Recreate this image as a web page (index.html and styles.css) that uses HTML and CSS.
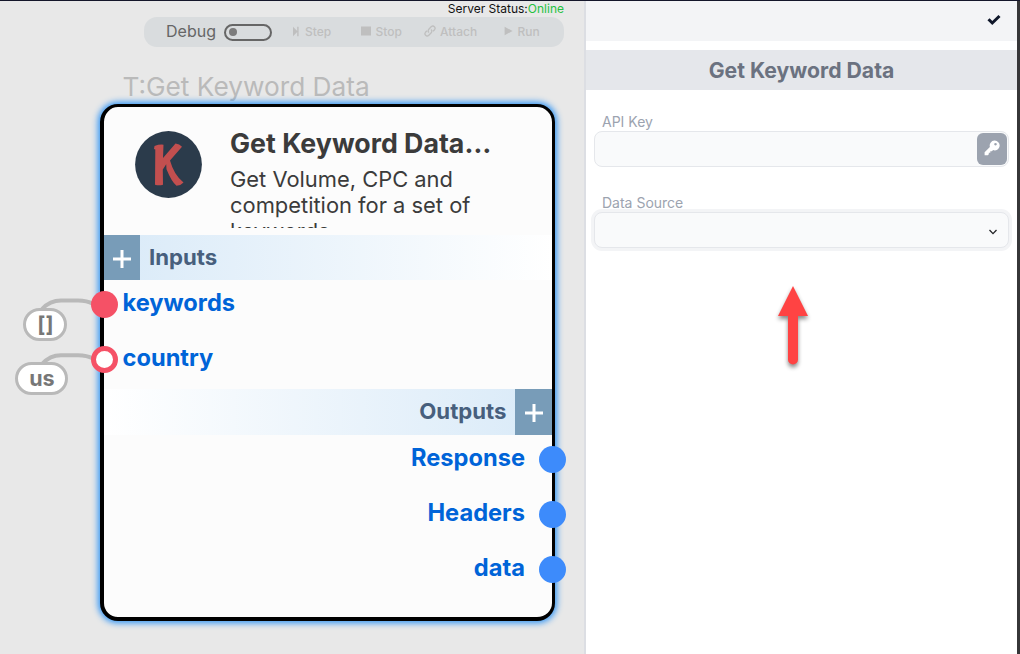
FILE: index.html
```html
<!DOCTYPE html>
<html lang="en">
<head>
<meta charset="utf-8">
<title>Get Keyword Data</title>
<link rel="stylesheet" href="styles.css">
</head>
<body>
<main class="app">
  <section class="canvas">
    <div class="status"><span class="status-label">Server Status:</span><span class="online">Online</span></div>
    <div class="toolbar">
      <span class="debug">Debug</span>
      <span class="toggle"><i class="knob"></i></span>
      <span class="tool step"><svg width="8" height="11" viewBox="0 0 8 11"><path d="M1 .8 5.2 5V.8h1.4v9.4H5.2V6L1 10.2z"/></svg>Step</span>
      <span class="tool stop"><svg width="10" height="10" viewBox="0 0 10 10"><path d="M0 .5h10v9H0z"/></svg>Stop</span>
      <span class="tool attach"><svg class="line" width="12" height="12" viewBox="0 0 12 12"><path d="M5 7.6a2.3 2.3 0 0 1-.2-3.3L7.4 1.6a2.2 2.2 0 0 1 3.1 3.1L9 6.3M7 4.4a2.3 2.3 0 0 1 .2 3.3l-2.6 2.7a2.2 2.2 0 0 1-3.1-3.1L3 5.7"/></svg>Attach</span>
      <span class="tool run"><svg width="9" height="10" viewBox="0 0 9 10"><path d="M.6.8 8.6 5 .6 9.2z"/></svg>Run</span>
    </div>
    <div class="node-tag">T:Get Keyword Data</div>
    <article class="node">
      <header class="node-head">
        <svg class="logo" width="67" height="67" viewBox="0 0 67 67"><circle cx="33.5" cy="33.5" r="33.4" fill="#2b3b4b"/><path fill="#c24f4f" d="M19.500 15Q24 13.300 28.500 13.700L28 27 40.500 12.600Q44.500 12.800 47 15.800L35 29.500Q39 44 48.500 51.500 46 54.500 41.500 54.800 36.500 50.500 31.500 38.200L31.200 33.300 27.800 38.500 28 53.800Q24 54.800 20 53.800L20.300 18.500 19 18z"/></svg>
        <div class="node-info">
          <h2 class="node-title">Get Keyword Data…</h2>
          <p class="node-desc">Get Volume, CPC and competition for a set of keywords.</p>
        </div>
      </header>
      <div class="bar inputs"><span class="add"><svg width="18" height="18" viewBox="0 0 18 18"><path d="M0 9h18M9 0v18"/></svg></span><span class="bar-name">Inputs</span></div>
      <ul class="ports ports-in">
        <li class="port">keywords</li>
        <li class="port">country</li>
      </ul>
      <div class="bar outputs"><span class="bar-name">Outputs</span><span class="add"><svg width="18" height="18" viewBox="0 0 18 18"><path d="M0 9h18M9 0v18"/></svg></span></div>
      <ul class="ports ports-out">
        <li class="port">Response<i class="dot blue"></i></li>
        <li class="port">Headers<i class="dot blue"></i></li>
        <li class="port">data<i class="dot blue"></i></li>
      </ul>
    </article>
    <svg class="wires" width="120" height="140" viewBox="0 280 120 140"><path d="M42 309Q50 300.500 61 300.500H78Q87 300.500 93 304M42 364Q50 355.200 61 355.200H78Q87 355.200 93 358.500"/></svg>
    <span class="chip chip-list">[]</span>
    <span class="chip chip-us">us</span>
    <div class="dots-front"><i class="dot red"></i><i class="dot ring"></i></div>
  </section>
  <aside class="panel">
    <div class="panel-top"><svg width="14" height="12" viewBox="0 0 14 12"><path d="M1.500 5.200 5.300 9 12.500 2" fill="none" stroke="#0f172a" stroke-width="3"/></svg></div>
    <h1 class="panel-title">Get Keyword Data</h1>
    <form class="fields">
      <label class="label">API Key</label>
      <div class="field key-field"><span class="key-btn"><svg width="16" height="16" viewBox="0 0 16 16"><path fill="#fff" fill-rule="evenodd" d="M10.400.6a4.900 4.900 0 1 1-1.300 9.500L7.900 11.200H6.300v1.500H4.800V14.200L3.800 15.200H.6V12.200L5.900 6.900A4.900 4.900 0 0 1 10.400.6zM11.500 2.900a1.300 1.300 0 1 0 .01 0z"/></svg></span></div>
      <label class="label">Data Source</label>
      <div class="field select"><svg width="10" height="8" viewBox="0 0 10 8"><path d="M1.500 2 5 5.600 8.500 2" fill="none" stroke="#202124" stroke-width="1.300"/></svg></div>
    </form>
    <svg class="arrow" width="50" height="100" viewBox="0 0 50 100"><path fill="#ff4343" d="M25 10 40 40H30V83.500a5 5 0 0 1-10 0V40H10z"/></svg>
  </aside>
</main>
</body>
</html>
```
FILE: styles.css
```css
* { box-sizing: border-box; }
body { margin: 0; font-family: Inter, "Liberation Sans", sans-serif; overflow: hidden; }
h1, h2, p, ul { margin: 0; padding: 0; list-style: none; }
.app { display: grid; grid-template-columns: 584px 1fr; width: 1020px; height: 654px; border-top: 1px solid #14162a; }
.canvas { position: relative; background: #e8e8e8; display: flex; flex-direction: column; align-items: flex-end; }
.status { font-size: 12px; line-height: 15px; height: 16px; padding-right: 20px; color: #111; white-space: nowrap; }
.online { color: #25c13f; }
.toolbar { width: 420px; height: 30px; margin-right: 20px; border-radius: 13px; background: #d9dcde; display: flex; align-items: center; padding: 0 0 2px 22px; }
.debug { width: 58px; font-size: 16px; color: #666; }
.toggle { width: 48px; height: 17px; border: 2px solid #666; border-radius: 9px; padding: 2.500px 3px; display: flex; margin-top: 2px; }
.knob { width: 8px; height: 8px; border-radius: 50%; background: #7c7c7c; }
.tool { display: flex; align-items: center; gap: 4px; font-size: 12px; font-weight: 500; color: #bfbfbf; }
.tool svg { fill: #bfbfbf; }
.tool .line { fill: none; stroke: #bfbfbf; stroke-width: 1.300; }
.step { margin-left: 20px; width: 69px; gap: 5px; }
.stop { width: 63px; gap: 4.500px; }
.attach { width: 79.500px; }
.run { gap: 5px; }
.node-tag { position: absolute; left: 122.500px; top: 69.500px; font-size: 26.250px; line-height: 32px; color: #bababa; white-space: nowrap; }
.node { position: absolute; left: 100px; top: 103px; width: 455px; height: 517px; border: solid #000; border-width: 3px 3px 4px 4px; border-radius: 18px; background: #fcfcfc; box-shadow: 0 0 6px 2px #2f94f5; }
.node-head { height: 128px; display: flex; padding: 24px 0 0 31px; }
.logo { flex: none; }
.node-info { margin-left: 28px; width: 270px; height: 97px; overflow: hidden; color: #3b3b3b; }
.node-title { font-size: 26.750px; line-height: 25px; height: 35px; font-weight: 700; white-space: nowrap; }
.node-desc { font-size: 21.900px; line-height: 26px; }
.bar { height: 45px; display: flex; color: #475f7d; font-size: 22.200px; font-weight: 700; }
.inputs { background: linear-gradient(90deg, #d9eaf8, #fff); }
.outputs { height: 46px; background: linear-gradient(270deg, #d9eaf8, #fff); justify-content: flex-end; }
.bar-name { line-height: 43px; padding: 0 8.500px 0 9px; }
.outputs .bar-name { line-height: 44px; }
.add { width: 36px; background: #789cb8; display: flex; align-items: center; justify-content: center; padding-top: 2px; }
.outputs .add { width: 37px; }
.add svg { fill: none; stroke: #fff; stroke-width: 3; }
.ports { color: #0064d8; font-size: 23.650px; font-weight: 700; line-height: 46px; }
.port { height: 55px; display: flex; }
.ports-in { height: 109px; padding-left: 18.500px; }
.ports-out .port { justify-content: flex-end; }
.dot { flex: none; width: 27px; height: 27px; border-radius: 50%; margin-top: 11px; }
.red { background: #f55166; }
.ring { background: #fff; border: 5px solid #f55166; }
.blue { background: #3d8bfb; }
.ports-out .dot { margin-left: 14px; margin-right: -14px; }
.wires { position: absolute; left: 0; top: 279px; fill: none; stroke: #b9b9b9; stroke-width: 4; }
.chip { position: absolute; height: 33px; border: 3px solid #b9b9b9; border-radius: 17px; background: #fff; color: #777; font-size: 21.500px; font-weight: 700; line-height: 27px; text-align: center; }
.chip-list { left: 23.400px; top: 306.500px; width: 44px; }
.chip-us { left: 15.400px; top: 361px; width: 53px; }
.dots-front { position: absolute; left: 90.700px; top: 290px; display: flex; flex-direction: column; }
.dots-front .dot { margin: 0 0 28px; }
.panel { position: relative; background: #fff; border-left: 2px solid #dcdee3; border-right: 3px solid #363638; }
.panel-top { height: 40px; background: #f3f4f6; display: flex; justify-content: flex-end; padding: 13px 16px 0 0; }
.panel-title { margin-top: 9px; height: 40px; background: #e5e7eb; color: #6b7280; font-size: 21.200px; font-weight: 700; line-height: 40px; text-align: center; }
.fields { padding: 22px 8px 0; display: flex; flex-direction: column; }
.label { font-size: 14px; line-height: 19px; color: #9ca3af; padding-left: 8px; }
.field { height: 36px; border: 1px solid #e5e7eb; border-radius: 8px; background: #f9fafb; margin-bottom: 26px; display: flex; justify-content: flex-end; align-items: center; }
.key-btn { width: 30px; height: 32px; border-radius: 6px; background: #9ca3af; display: flex; justify-content: center; padding-top: 7px; margin-right: 1px; }
.select { box-shadow: 0 0 0 3px #f3f4f6; padding-right: 10.500px; padding-top: 3px; }
.arrow { position: absolute; left: 182px; top: 275px; filter: drop-shadow(0 3px 2px #0007); }
```
